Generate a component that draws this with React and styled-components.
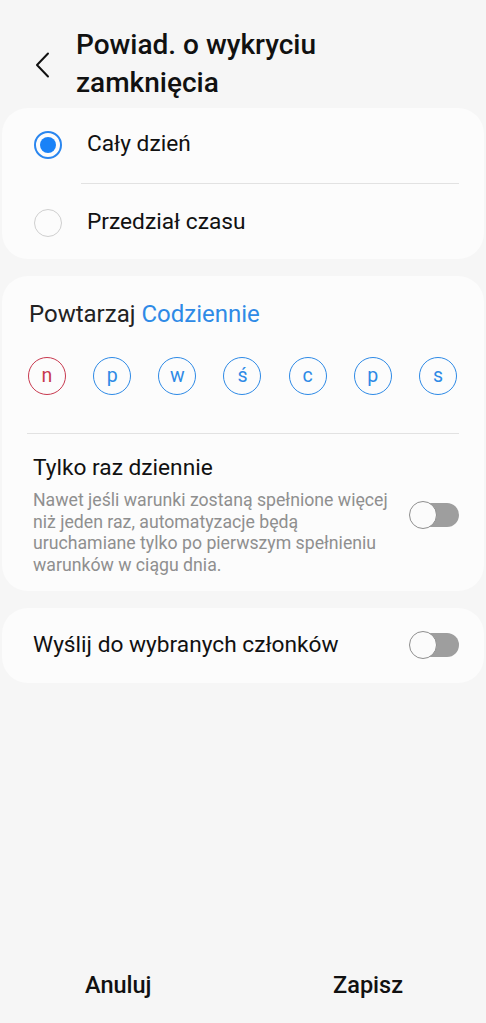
import { useState } from 'react';
import styled, { createGlobalStyle } from 'styled-components';

const GlobalStyle = createGlobalStyle`
    html, body {
        margin: 0;
        padding: 0;
        background: #f6f6f6;
    }
    body {
        font-family: Roboto, "Noto Sans", sans-serif;
        color: #111;
    }
`;

const days = [
    { label: 'n', sunday: true },
    { label: 'p' },
    { label: 'w' },
    { label: 'ś' },
    { label: 'c' },
    { label: 'p' },
    { label: 's' },
];

function App() {
    const [mode, setMode] = useState('all');
    const [onceDaily, setOnceDaily] = useState(false);
    const [sendMembers, setSendMembers] = useState(false);

    return (
        <Page>
            <GlobalStyle />
            <Header>
                <BackButton aria-label="Wstecz">
                    <svg width="16" height="26" viewBox="0 0 16 26" fill="none">
                        <path d="M13 1.5 L2 13 L13 24.5" stroke="#111" strokeWidth="2" strokeLinecap="round" strokeLinejoin="round" />
                    </svg>
                </BackButton>
                <Title>Powiad. o wykryciu zamknięcia</Title>
            </Header>

            <Card>
                <RadioRow onClick={() => setMode('all')}>
                    <Radio checked={mode === 'all'} />
                    <RowLabel>Cały dzień</RowLabel>
                </RadioRow>
                <Divider inset={79} />
                <RadioRow onClick={() => setMode('range')}>
                    <Radio checked={mode === 'range'} />
                    <RowLabel>Przedział czasu</RowLabel>
                </RadioRow>
            </Card>

            <Card>
                <RepeatLine>
                    Powtarzaj <Accent>Codziennie</Accent>
                </RepeatLine>
                <Days>
                    {days.map((d, i) => (
                        <Day key={i} sunday={d.sunday}>{d.label}</Day>
                    ))}
                </Days>
                <Divider inset={25} />
                <SwitchRow>
                    <SwitchText>
                        <SwitchTitle>Tylko raz dziennie</SwitchTitle>
                        <SwitchDesc>
                            Nawet jeśli warunki zostaną spełnione więcej niż jeden raz, automatyzacje będą uruchamiane tylko po pierwszym spełnieniu warunków w ciągu dnia.
                        </SwitchDesc>
                    </SwitchText>
                    <Toggle on={onceDaily} onClick={() => setOnceDaily(!onceDaily)} />
                </SwitchRow>
            </Card>

            <Card>
                <SingleRow>
                    <SwitchTitle>Wyślij do wybranych członków</SwitchTitle>
                    <Toggle on={sendMembers} onClick={() => setSendMembers(!sendMembers)} />
                </SingleRow>
            </Card>

            <Footer>
                <FooterButton>Anuluj</FooterButton>
                <FooterButton>Zapisz</FooterButton>
            </Footer>
        </Page>
    );
}

const Page = styled.div`
    min-height: 100vh;
    display: flex;
    flex-direction: column;
    gap: 17px;
    padding: 0 2px;
    box-sizing: border-box;
`;

const Header = styled.div`
    display: flex;
    align-items: center;
    padding: 26px 20px 0 26px;
    height: 76px;
    margin-bottom: -11px;
`;

const BackButton = styled.div`
    width: 48px;
    display: flex;
    align-items: center;
    padding-left: 7px;
    box-sizing: border-box;
    margin-top: 2px;
`;

const Title = styled.h1`
    margin: 0;
    font-size: 28px;
    font-weight: 500;
    line-height: 38px;
    color: #111;
    max-width: 300px;
`;

const Card = styled.div`
    background: #fcfcfc;
    border-radius: 26px;
    display: flex;
    flex-direction: column;
`;

const RadioRow = styled.div`
    height: 75px;
    display: flex;
    align-items: center;
    padding-left: 32px;
    cursor: pointer;
`;

const Radio = styled.span`
    width: 28px;
    height: 28px;
    border-radius: 50%;
    box-sizing: border-box;
    border: ${p => (p.checked ? '2px solid #2a86ef' : '1.5px solid #cfcfcf')};
    display: flex;
    align-items: center;
    justify-content: center;
    margin-top: ${p => (p.checked ? '-2px' : '2px')};

    &::after {
        content: '';
        width: 16px;
        height: 16px;
        border-radius: 50%;
        background: #1a82f7;
        display: ${p => (p.checked ? 'block' : 'none')};
    }
`;

const RowLabel = styled.span`
    margin-left: 25px;
    font-size: 22.7px;
    color: #111;
    margin-top: ${p => (p.children === 'Cały dzień' ? '-4px' : '0')};
`;

const Divider = styled.div`
    height: 1px;
    background: #e2e2e2;
    margin-left: ${p => p.inset}px;
    margin-right: 25px;
`;

const RepeatLine = styled.div`
    font-size: 24px;
    color: #222;
    padding: 24px 27px 0;
    line-height: 28px;
`;

const Accent = styled.span`
    color: #2e8ae6;
`;

const Days = styled.div`
    display: flex;
    justify-content: space-between;
    padding: 29px 27px 38px 26px;
`;

const Day = styled.span`
    width: 38px;
    height: 38px;
    border-radius: 50%;
    box-sizing: border-box;
    border: 1.5px solid ${p => (p.sunday ? '#c8394f' : '#2e8ae6')};
    color: ${p => (p.sunday ? '#c8394f' : '#2e8ae6')};
    display: flex;
    align-items: center;
    justify-content: center;
    font-size: 19.5px;
    padding-bottom: 2px;
`;

const SwitchRow = styled.div`
    display: flex;
    align-items: center;
    justify-content: space-between;
    padding: 20px 25px 14px 31px;
`;

const SwitchText = styled.div`
    display: flex;
    flex-direction: column;
    max-width: 360px;
`;

const SwitchTitle = styled.span`
    font-size: 22.7px;
    color: #111;
    line-height: 28px;
`;

const SwitchDesc = styled.span`
    font-size: 17.7px;
    line-height: 21.7px;
    color: #8f8f8f;
    margin-top: 8px;
`;

const SingleRow = styled.div`
    height: 75px;
    display: flex;
    align-items: center;
    justify-content: space-between;
    padding: 0 25px 0 31px;
`;

const Toggle = styled.span`
    position: relative;
    flex: none;
    width: 50px;
    height: 28px;
    cursor: pointer;

    &::before {
        content: '';
        position: absolute;
        left: 2px;
        right: 0;
        top: 2px;
        bottom: 2px;
        border-radius: 12px;
        background: ${p => (p.on ? '#2a86ef' : '#9e9e9e')};
    }

    &::after {
        content: '';
        position: absolute;
        top: 0;
        left: ${p => (p.on ? '22px' : '0')};
        width: 28px;
        height: 28px;
        box-sizing: border-box;
        border-radius: 50%;
        background: #fbfbfb;
        border: 1.5px solid #8e8e8e;
    }
`;

const Footer = styled.div`
    margin-top: auto;
    display: flex;
    justify-content: space-between;
    height: 76px;
    align-items: center;
    padding: 0 81px 0 83px;
`;

const FooterButton = styled.button`
    background: none;
    border: none;
    font-family: Roboto, "Noto Sans", sans-serif;
    font-size: 23.5px;
    font-weight: 500;
    color: #111;
    padding: 0;
`;

export default App;
